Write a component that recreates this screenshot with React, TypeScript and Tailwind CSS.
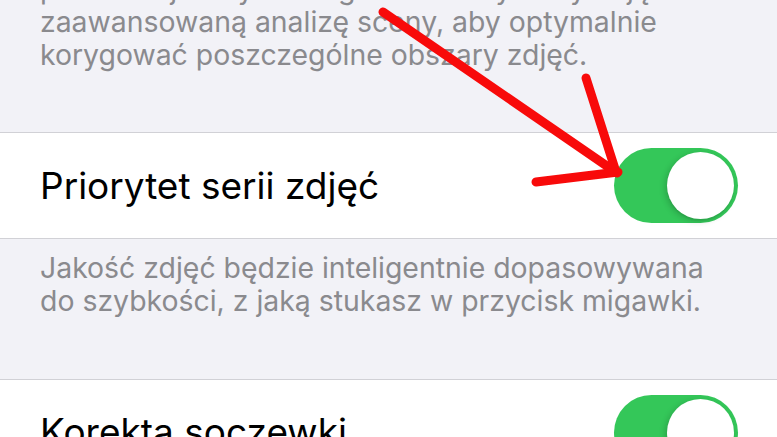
import React from "react";

function Toggle() {
  return (
    <div className="flex h-[75px] w-[124px] shrink-0 items-center justify-end rounded-full bg-[#34c759] p-[4px]">
      <div className="h-[67px] w-[67px] rounded-full bg-white shadow-[-2px_2px_6px_rgba(0,0,0,0.18),0_2px_1px_rgba(0,0,0,0.05)]" />
    </div>
  );
}

function Separator() {
  return <div className="h-px w-full bg-[#d1d1d6]" />;
}

function Row({ title }: { title: string }) {
  return (
    <div className="flex h-[105px] items-center justify-between bg-white pl-[40px] pr-[39px]">
      <span className="text-[37px] leading-none text-black">{title}</span>
      <Toggle />
    </div>
  );
}

export default function App() {
  return (
    <div
      className="relative h-[437px] w-[777px] overflow-hidden bg-[#f2f2f7]"
      style={{ fontFamily: "Inter, 'Noto Sans', sans-serif" }}
    >
      <div className="flex flex-col">
        <div className="mt-[-28px] pb-[61px] pl-[40px] pr-[30px] text-[28.4px] leading-[33px] text-[#8a8a8e]">
          <div>preferencje. Style fotograficzne wykorzystują</div>
          <div>zaawansowaną analizę sceny, aby optymalnie</div>
          <div>korygować poszczególne obszary zdjęć.</div>
        </div>
        <Separator />
        <Row title="Priorytet serii zdjęć" />
        <Separator />
        <div className="pb-[62px] pl-[40px] pr-[30px] pt-[12px] text-[28.4px] leading-[33px] text-[#8a8a8e]">
          <div>Jakość zdjęć będzie inteligentnie dopasowywana</div>
          <div>do szybkości, z jaką stukasz w przycisk migawki.</div>
        </div>
        <Separator />
        <div className="flex h-[105px] items-start justify-between bg-white pl-[40px] pr-[39px] pt-[15px]">
          <span className="mt-[18px] text-[37px] leading-none text-black">Korekta soczewki</span>
          <Toggle />
        </div>
      </div>
      <svg
        className="pointer-events-none absolute left-0 top-0"
        width="777"
        height="437"
        viewBox="0 0 777 437"
      >
        <g stroke="#f80a0a" strokeWidth="9" strokeLinecap="round" fill="none">
          <line x1="383" y1="12" x2="617" y2="173" />
          <line x1="586" y1="78" x2="616" y2="172" />
          <line x1="536" y1="182" x2="618" y2="172" />
        </g>
      </svg>
    </div>
  );
}
